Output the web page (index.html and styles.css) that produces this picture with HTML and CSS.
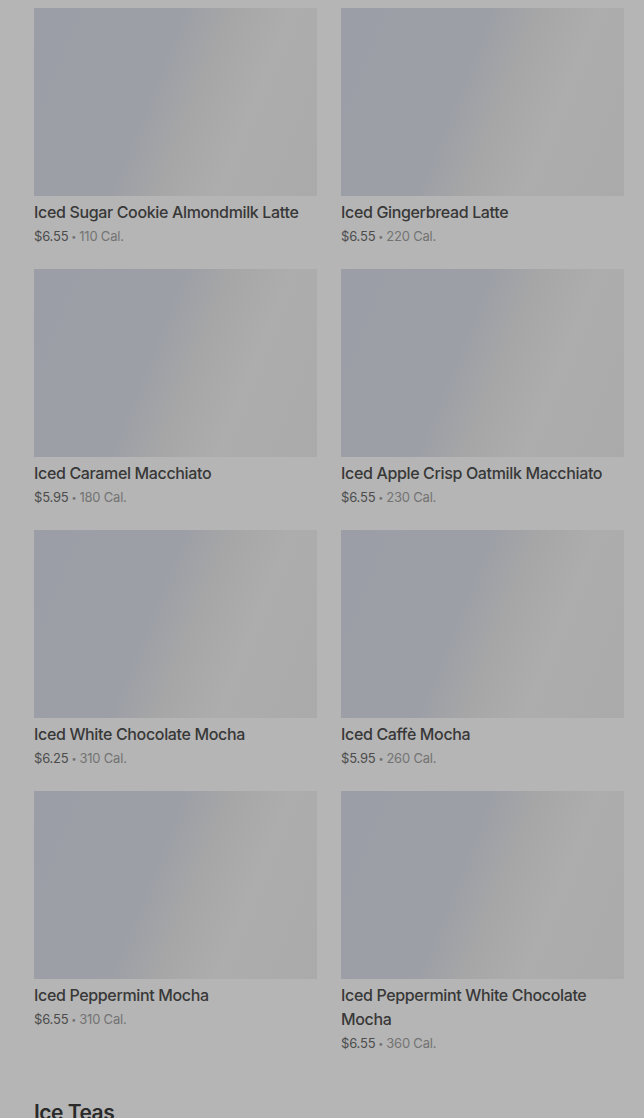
FILE: index.html
```html
<!DOCTYPE html>
<html>
  <head>
  <meta name="viewport" content="width=device-width, initial-scale=1.0">
  <meta charset="UTF-8">
  <link rel="stylesheet" href="styles.css">
  </head>
<body>

<div id="menu-page">
    <div class="product-grid">
        <div class="product">
            <div class="product-image"></div>
            <div class="product-name">Iced Sugar Cookie Almondmilk Latte</div>
            <div class="product-meta"><span class="price">$6.55</span><span class="dot">•</span>110 Cal.</div>
        </div>
        <div class="product">
            <div class="product-image"></div>
            <div class="product-name">Iced Gingerbread Latte</div>
            <div class="product-meta"><span class="price">$6.55</span><span class="dot">•</span>220 Cal.</div>
        </div>
        <div class="product">
            <div class="product-image"></div>
            <div class="product-name">Iced Caramel Macchiato</div>
            <div class="product-meta"><span class="price">$5.95</span><span class="dot">•</span>180 Cal.</div>
        </div>
        <div class="product">
            <div class="product-image"></div>
            <div class="product-name">Iced Apple Crisp Oatmilk Macchiato</div>
            <div class="product-meta"><span class="price">$6.55</span><span class="dot">•</span>230 Cal.</div>
        </div>
        <div class="product">
            <div class="product-image"></div>
            <div class="product-name">Iced White Chocolate Mocha</div>
            <div class="product-meta"><span class="price">$6.25</span><span class="dot">•</span>310 Cal.</div>
        </div>
        <div class="product">
            <div class="product-image"></div>
            <div class="product-name">Iced Caffè Mocha</div>
            <div class="product-meta"><span class="price">$5.95</span><span class="dot">•</span>260 Cal.</div>
        </div>
        <div class="product">
            <div class="product-image"></div>
            <div class="product-name">Iced Peppermint Mocha</div>
            <div class="product-meta"><span class="price">$6.55</span><span class="dot">•</span>310 Cal.</div>
        </div>
        <div class="product">
            <div class="product-image"></div>
            <div class="product-name">Iced Peppermint White Chocolate Mocha</div>
            <div class="product-meta"><span class="price">$6.55</span><span class="dot">•</span>360 Cal.</div>
        </div>
    </div>

    <h2 class="section-title">Ice Teas</h2>
</div>

</body>
</html>
```

FILE: styles.css
```css
body{
margin: 0;
background-color: #b5b5b5;
font-family: Inter, "Liberation Sans", sans-serif;
}

#menu-page{
padding: 8px 20px 0 34px;
}

.product-grid{
display: grid;
grid-template-columns: 283px 283px;
column-gap: 24px;
row-gap: 21px;
}

.product-image{
height: 188px;
background: linear-gradient(112deg, #9b9ea6 0%, #9c9fa6 42%, #a6a6a7 55%, #adadad 72%, #aaaaaa 100%);
}

.product-name{
margin-top: 4px;
font-size: 16px;
line-height: 24px;
font-weight: 500;
color: #383838;
letter-spacing: -0.35px;
}

.product-meta{
height: 24px;
font-size: 13px;
line-height: 24px;
color: #737373;
letter-spacing: -0.2px;
}

.product-meta .price{
color: #4c4c4c;
}

.product-meta .dot{
font-size: 9px;
line-height: 1;
margin: 0 3px;
vertical-align: 1px;
}

.section-title{
margin: 44px 0 0 0;
font-size: 21px;
line-height: 28px;
font-weight: 600;
color: #2a2a2a;
letter-spacing: -0.5px;
}
```
